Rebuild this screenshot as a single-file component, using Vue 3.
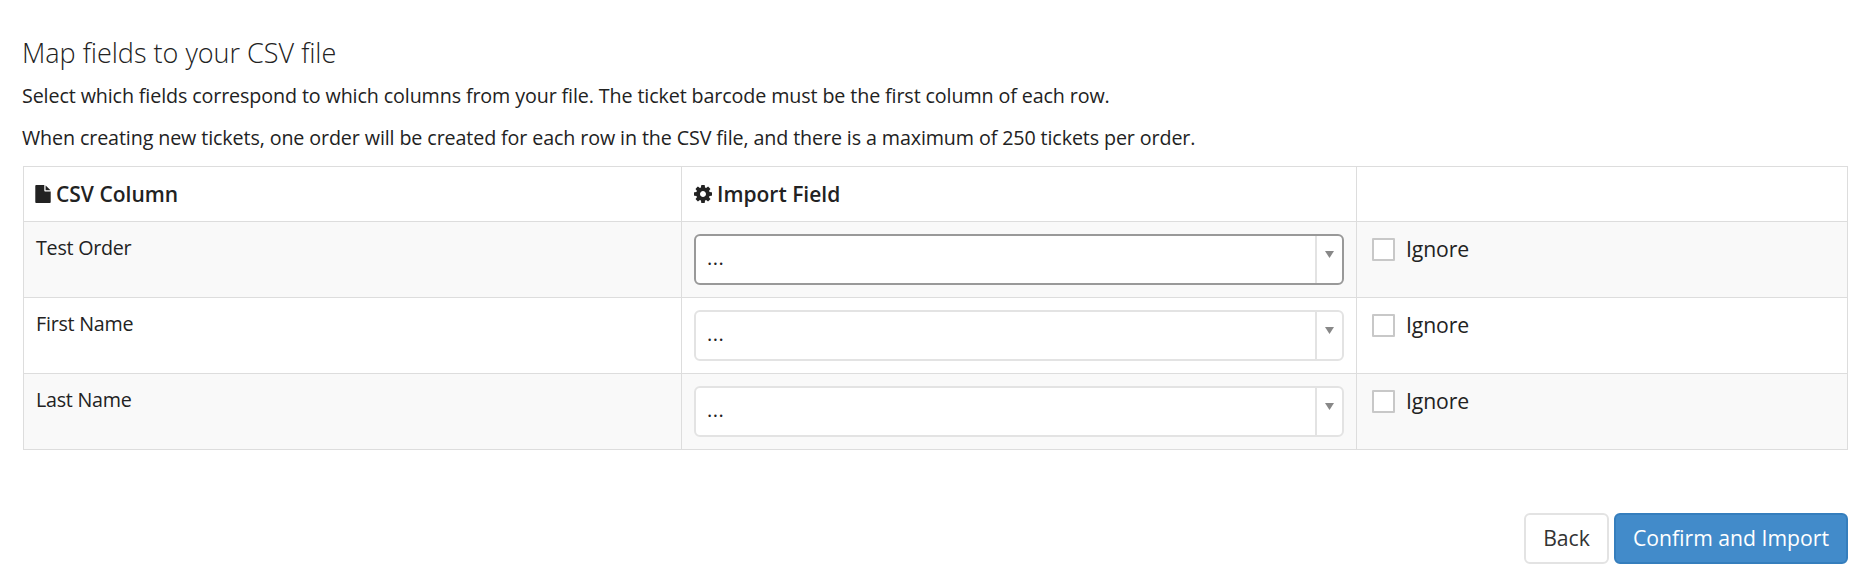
<script setup>
import { ref } from 'vue'

const columns = ref([
  { name: 'Test Order', ignore: false },
  { name: 'First Name', ignore: false },
  { name: 'Last Name', ignore: false }
])

const focused = ref(0)
</script>

<template>
  <div class="import-page">
    <h3 class="title">Map fields to your CSV file</h3>
    <p class="lead">Select which fields correspond to which columns from your file. The ticket barcode must be the first column of each row.</p>
    <p class="lead">When creating new tickets, one order will be created for each row in the CSV file, and there is a maximum of 250 tickets per order.</p>

    <table class="mapping">
      <colgroup>
        <col class="col-csv" />
        <col class="col-field" />
        <col />
      </colgroup>
      <thead>
        <tr>
          <th class="th-csv">
            <div class="heading">
              <svg class="icon-file" viewBox="0 0 1536 1792">
                <path d="M1024 512V40q22 14 36 28l408 408q14 14 28 36h-472zM896 544q0 40 28 68t68 28h544v1056q0 40-28 68t-68 28H96q-40 0-68-28t-28-68V96q0-40 28-68T96 0h800v544z" />
              </svg>
              <span>CSV Column</span>
            </div>
          </th>
          <th>
            <div class="heading">
              <svg class="icon-cog" viewBox="0 128 1536 1536">
                <path d="M1024 896q0-106-75-181t-181-75-181 75-75 181 75 181 181 75 181-75 75-181zm512-109v222q0 12-8 23t-20 13l-185 28q-19 54-39 91 35 50 107 138 10 12 10 25t-9 23q-27 37-99 108t-94 71q-12 0-26-9l-138-108q-44 23-91 38-16 136-29 186-7 28-36 28H657q-14 0-24.500-8.500T621 1634l-28-184q-49-16-90-37l-141 107q-10 9-25 9-14 0-25-11-126-114-165-168-7-10-7-23 0-12 8-23 15-21 51-66.500t54-70.500q-27-50-41-99l-183-27q-13-2-21-12.500T0 1005V783q0-12 8-23t19-13l186-28q14-46 39-92-40-57-107-138-10-12-10-24 0-10 9-23 26-36 98.500-107.500T337 263q13 0 26 10l138 107q44-23 91-38 16-136 29-186 7-28 36-28h222q14 0 24.500 8.500T915 158l28 184q49 16 90 37l142-107q9-9 24-9 13 0 25 10 129 119 165 170 7 8 7 22 0 12-8 23-15 21-51 66.500t-54 70.500q26 50 41 98l183 28q13 2 21 12.500t8 23.500z" />
              </svg>
              <span>Import Field</span>
            </div>
          </th>
          <th></th>
        </tr>
      </thead>
      <tbody>
        <tr v-for="(column, index) in columns" :key="column.name">
          <td class="cell-name">{{ column.name }}</td>
          <td class="cell-field">
            <div class="select" :class="{ focused: focused === index }" @click="focused = index">
              <span class="select-value">...</span>
              <span class="select-arrow">
                <svg viewBox="0 0 9 7"><path d="M0 0h9L4.500 7z" /></svg>
              </span>
            </div>
          </td>
          <td class="cell-ignore">
            <label class="ignore">
              <input v-model="column.ignore" type="checkbox" />
              <span>Ignore</span>
            </label>
          </td>
        </tr>
      </tbody>
    </table>

    <div class="actions">
      <button type="button" class="btn">Back</button>
      <button type="button" class="btn btn-primary">Confirm and Import</button>
    </div>
  </div>
</template>

<style>
body { background: #fff; }
</style>

<style scoped>
.import-page {
  box-sizing: border-box;
  height: 584px;
  padding: 34px 15px 0 22px;
  overflow: hidden;
  font-family: "Open Sans", sans-serif;
  font-size: 19.700px;
  letter-spacing: -0.115px;
  color: #222;
}

.title {
  margin: 0 0 10px;
  font-size: 27px;
  font-weight: 300;
  line-height: 37px;
  letter-spacing: 0;
}

.lead {
  margin: 0 0 12px;
  line-height: 30px;
  white-space: nowrap;
}

.mapping {
  width: 1825px;
  margin: 13px 0 0 1px;
  table-layout: fixed;
  border-collapse: separate;
  border-spacing: 0;
  border: solid #ddd;
  border-width: 1px 0 0 1px;
}

.col-csv { width: 658px; }
.col-field { width: 675px; }

.mapping th,
.mapping td {
  box-sizing: border-box;
  padding: 0 12px;
  border: solid #ddd;
  border-width: 0 1px 1px 0;
  text-align: left;
  vertical-align: top;
}

.mapping th { height: 55px; vertical-align: middle; }
.mapping .th-csv { padding-left: 11px; }
.mapping td { height: 76px; }
.mapping tbody tr:nth-child(odd) { background: #f9f9f9; }

.heading { display: flex; align-items: center; gap: 5px; font-size: 21px; font-weight: 600; line-height: 30px; letter-spacing: 0; }
.heading svg { fill: #222; }
.icon-file { width: 16px; height: 18px; }
.icon-cog { width: 18px; height: 18px; }

.mapping .cell-name { padding-top: 11px; line-height: 30px; letter-spacing: -0.250px; }
.mapping .cell-field { padding-top: 12px; }

.select {
  box-sizing: border-box;
  display: flex;
  height: 51px;
  border: 2px solid #e3e3e3;
  border-radius: 6px;
  background: #fff;
}

.select.focused { border-color: #999; }
.select-value { flex: 1; padding-left: 11px; font-size: 20px; line-height: 43px; letter-spacing: 0.500px; }

.select-arrow {
  box-sizing: border-box;
  display: flex;
  justify-content: center;
  width: 27px;
  padding-top: 15px;
  border-left: 2px solid #e3e3e3;
}

.select-arrow svg { width: 9px; height: 7px; fill: #888; }

.mapping .cell-ignore { padding: 11px 15px 0; }
.ignore { display: inline-flex; align-items: center; gap: 11px; height: 32px; font-size: 21.200px; line-height: 32px; }
.ignore span { margin-top: -1px; }

.ignore input {
  appearance: none;
  box-sizing: border-box;
  width: 23px;
  height: 23px;
  margin: 0;
  border: 2px solid #c8c8c8;
  border-radius: 1px;
  background: #fff;
}

.ignore input:checked { background: #428bca; }

.actions {
  display: flex;
  justify-content: flex-end;
  gap: 5px;
  margin-top: 63px;
}

.btn {
  box-sizing: border-box;
  width: 85px;
  height: 51px;
  padding: 0 0 2px;
  border: 2px solid #e3e3e3;
  border-radius: 6px;
  background: #fff;
  color: #333;
  font-family: inherit;
  font-size: 21.200px;
  white-space: nowrap;
}

.btn-primary {
  width: 234px;
  border-color: #357ebd;
  background: #428bca;
  color: #fff;
}
</style>
